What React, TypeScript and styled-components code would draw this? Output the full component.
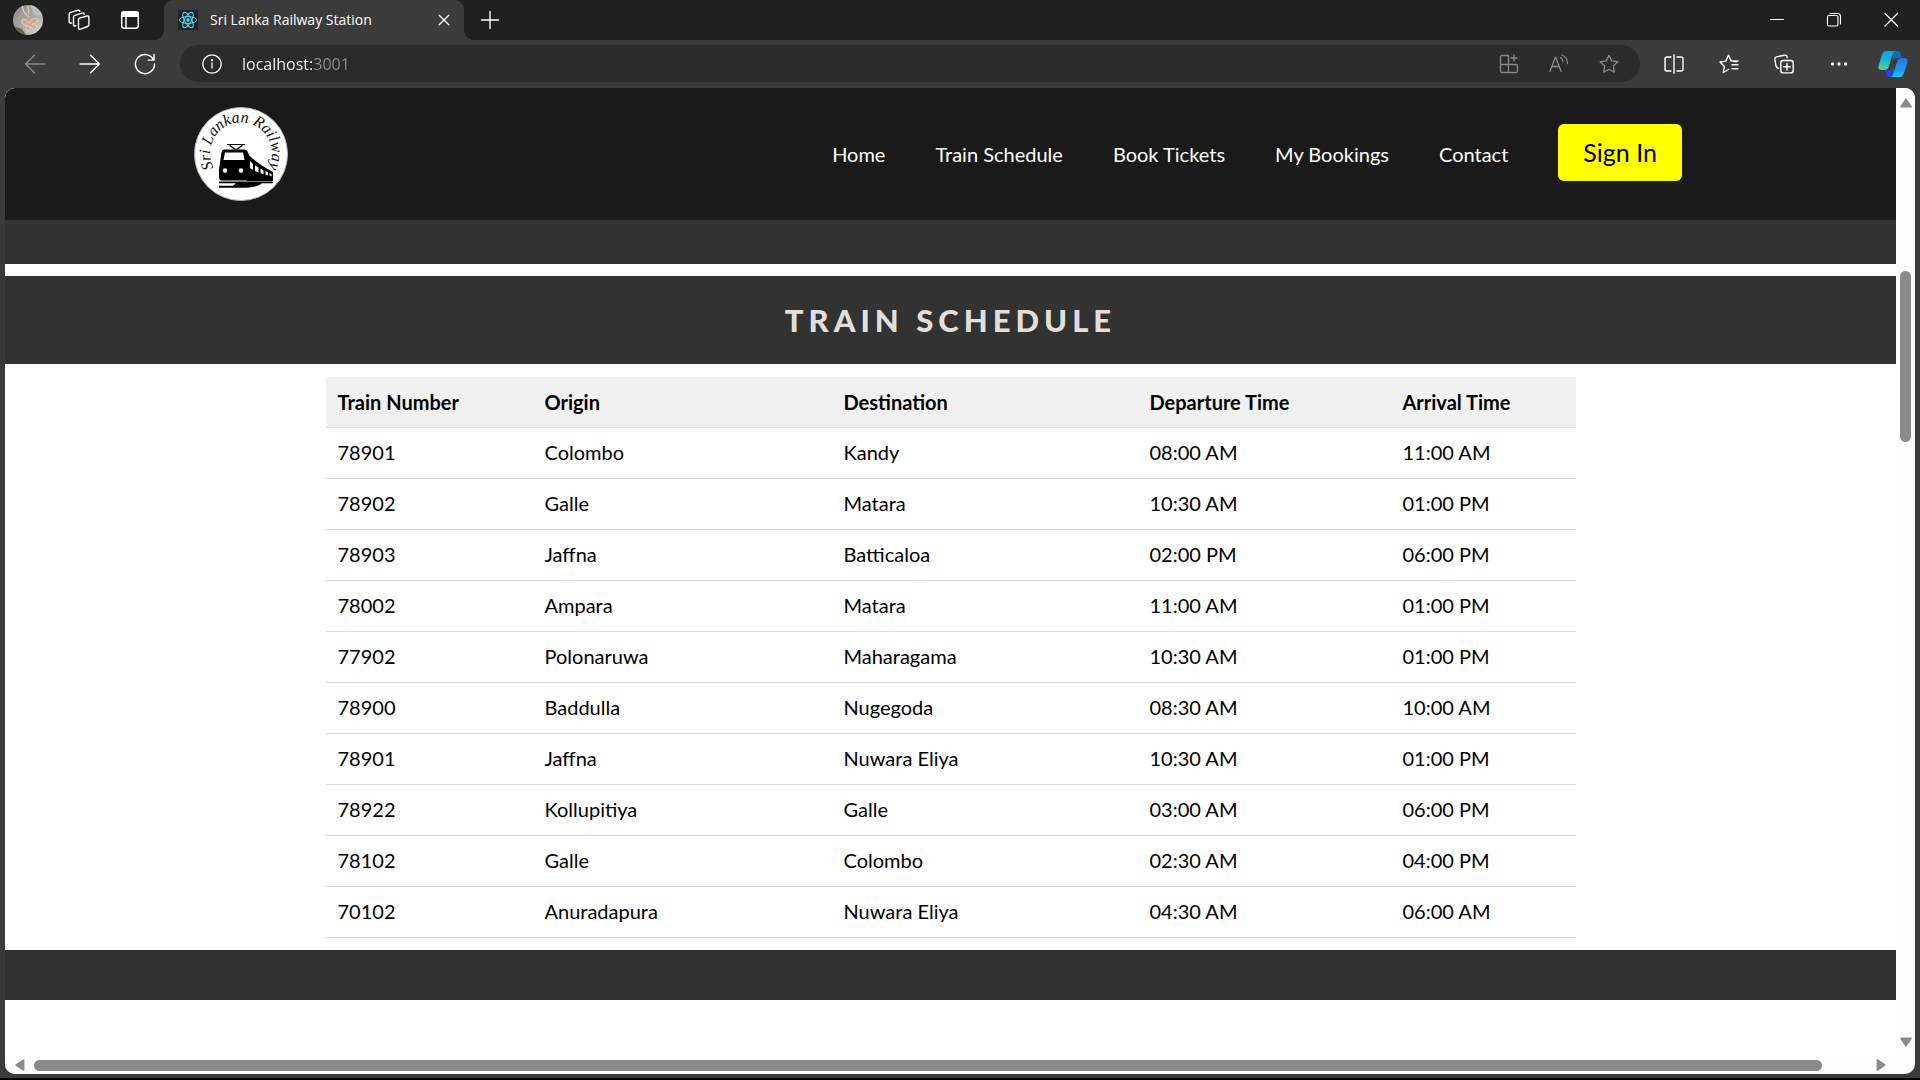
import React from "react";
import styled, { createGlobalStyle } from "styled-components";

const UI_FONT = `"Open Sans", "Noto Sans", sans-serif`;
const PAGE_FONT = `Lato, "Open Sans", sans-serif`;

const GlobalStyle = createGlobalStyle`
  *, *::before, *::after { box-sizing: border-box; }
  body { margin: 0; background: #000; }
  button { border: 0; padding: 0; background: none; font: inherit; color: inherit; cursor: pointer; }
  svg { display: block; }
`;

/* ---------- browser window ---------- */

const Window = styled.div`
  display: flex;
  flex-direction: column;
  min-height: 100vh;
  background: #3b3b3b;
  border-bottom: 2px solid #000;
  font-family: ${UI_FONT};
  color: #fff;
`;

const TitleBar = styled.header`
  display: flex;
  align-items: stretch;
  height: 40px;
  padding-left: 2px;
  background: #202020;
`;

const IconButton = styled.button<{ $width: number; $dim?: boolean }>`
  display: flex;
  align-items: center;
  justify-content: center;
  flex: none;
  width: ${(p) => p.$width}px;
  color: ${(p) => (p.$dim ? "#8a8a8a" : "#fff")};
`;

const Tab = styled.div`
  position: relative;
  display: flex;
  align-items: center;
  gap: 12px;
  width: 300px;
  margin: 0 10px 0 9px;
  padding: 0 8px 0 14px;
  border-radius: 9px 9px 0 0;
  background: #3b3b3b;
  font-size: 14px;
  line-height: 20px;
  white-space: nowrap;

  &::before,
  &::after {
    content: "";
    position: absolute;
    bottom: 0;
    width: 10px;
    height: 10px;
  }
  &::before {
    right: 100%;
    background: radial-gradient(circle at 0 0, #202020 10px, #3b3b3b 10px);
  }
  &::after {
    left: 100%;
    background: radial-gradient(circle at 100% 0, #202020 10px, #3b3b3b 10px);
  }
`;

const TabTitle = styled.span`
  flex: 1;
`;

const WindowControls = styled.div`
  display: flex;
  margin-left: auto;
  padding-right: 1px;
`;

const Toolbar = styled.div`
  display: flex;
  align-items: center;
  height: 48px;
  padding: 0 0 1px 7px;
`;

const AddressBar = styled.div`
  display: flex;
  align-items: center;
  flex: 1;
  height: 37px;
  margin: 0 6px 0 8px;
  padding: 0 6px 0 22px;
  border-radius: 19px;
  background: #2b2b2b;
`;

const AddressInput = styled.input`
  flex: 1;
  min-width: 0;
  margin-left: 20px;
  padding: 0;
  border: 0;
  outline: 0;
  font-family: ${UI_FONT};
  font-size: 16px;
  line-height: 24px;
  color: transparent;
  background: linear-gradient(to right, #fff 70px, #8f8f8f 70px);
  background-clip: text;
  -webkit-background-clip: text;
`;

const Viewport = styled.div`
  display: grid;
  grid-template-columns: minmax(0, 1fr) 19px;
  grid-template-rows: 1fr 18px;
  flex: 1;
  margin: 0 5px 4px;
  border-radius: 10px;
  overflow: hidden;
  background: #fcfcfc;
`;

/* ---------- scroll bars ---------- */

const ScrollTrack = styled.div<{ $horizontal?: boolean }>`
  display: flex;
  flex-direction: ${(p) => (p.$horizontal ? "row" : "column")};
  align-items: center;
  padding: ${(p) => (p.$horizontal ? "0 9px" : "10px 0 9px")};
  background: #fcfcfc;
  color: #8a8a8a;
`;

const ScrollGap = styled.div<{ $share: number }>`
  flex: ${(p) => p.$share} 1 0;
`;

const ScrollThumb = styled.div<{ $share: number }>`
  flex: ${(p) => p.$share} 1 0;
  min-width: 11px;
  min-height: 11px;
  border-radius: 6px;
  background: #8a8a8a;
`;

/* ---------- page ---------- */

const Page = styled.div`
  display: flex;
  flex-direction: column;
  background: #fff;
  color: #000;
  font-family: ${PAGE_FONT};
`;

const NavBar = styled.nav`
  display: flex;
  align-items: center;
  justify-content: space-between;
  min-height: 132px;
  padding: 0 10%;
  background: #1a1a1a;
`;

const NavList = styled.ul`
  display: flex;
  align-items: center;
  gap: 50px;
  margin: 0 25px;
  padding: 0;
  list-style: none;
`;

const NavLink = styled.a`
  color: #fff;
  font-size: 20px;
  line-height: 26px;
  text-decoration: none;
  white-space: nowrap;
`;

const SignIn = styled.button`
  && {
    display: block;
    margin-bottom: 4px;
    padding: 12px 25px 13px;
    border-radius: 6px;
    background: #ff0;
    color: #000;
    font-size: 25px;
    line-height: 32px;
    white-space: nowrap;
  }
`;

const Band = styled.div<{ $height: number }>`
  height: ${(p) => p.$height}px;
  background: #323232;
`;

const Heading = styled.h1`
  margin: 12px 0 0;
  padding: 24px 0;
  background: #323232;
  color: #e2dfda;
  font-size: 31px;
  font-weight: 900;
  line-height: 40px;
  letter-spacing: 5px;
  text-align: center;
  text-transform: uppercase;
`;

const Schedule = styled.table`
  table-layout: fixed;
  width: 90%;
  max-width: 1250px;
  margin: 13px auto 12px;
  border-collapse: collapse;
  font-size: 20px;
  line-height: 26px;
`;

const Column = styled.col<{ $share: number }>`
  width: ${(p) => p.$share}%;
`;

const HeadCell = styled.th`
  padding: 12px;
  border-bottom: 1px solid #ddd;
  background: #f1f1f1;
  text-align: left;
  font-weight: 700;
`;

const Cell = styled.td`
  padding: 11px 12px 13px;
  border-bottom: 1px solid #ddd;
`;

/* ---------- data ---------- */

const links = ["Home", "Train Schedule", "Book Tickets", "My Bookings", "Contact"];

const columns = [
  { title: "Train Number", share: 16.56 },
  { title: "Origin", share: 23.92 },
  { title: "Destination", share: 24.48 },
  { title: "Departure Time", share: 20.24 },
  { title: "Arrival Time", share: 14.8 },
];

const trains = [
  ["78901", "Colombo", "Kandy", "08:00 AM", "11:00 AM"],
  ["78902", "Galle", "Matara", "10:30 AM", "01:00 PM"],
  ["78903", "Jaffna", "Batticaloa", "02:00 PM", "06:00 PM"],
  ["78002", "Ampara", "Matara", "11:00 AM", "01:00 PM"],
  ["77902", "Polonaruwa", "Maharagama", "10:30 AM", "01:00 PM"],
  ["78900", "Baddulla", "Nugegoda", "08:30 AM", "10:00 AM"],
  ["78901", "Jaffna", "Nuwara Eliya", "10:30 AM", "01:00 PM"],
  ["78922", "Kollupitiya", "Galle", "03:00 AM", "06:00 PM"],
  ["78102", "Galle", "Colombo", "02:30 AM", "04:00 PM"],
  ["70102", "Anuradapura", "Nuwara Eliya", "04:30 AM", "06:00 AM"],
];

/* ---------- drawings ---------- */

const Icon = ({ size = 20, stroke = 1.3, children }: { size?: number; stroke?: number; children: React.ReactNode }) => (
  <svg width={size} height={size} viewBox="0 0 20 20" fill="none" stroke="currentColor" strokeWidth={stroke}
    strokeLinecap="round" strokeLinejoin="round" aria-hidden="true">
    {children}
  </svg>
);

const Avatar = () => (
  <svg width="30" height="30" viewBox="0 0 30 30" aria-hidden="true">
    <defs>
      <clipPath id="avatar"><circle cx="15" cy="15" r="15" /></clipPath>
      <linearGradient id="avatarBg" x1="0" y1="0" x2="1" y2="1">
        <stop offset="0" stopColor="#8b8a84" />
        <stop offset=".5" stopColor="#aaa79f" />
        <stop offset="1" stopColor="#e3ddd6" />
      </linearGradient>
    </defs>
    <g clipPath="url(#avatar)">
      <rect width="30" height="30" fill="url(#avatarBg)" />
      <path d="M17 0h13v11l-9-1z" fill="#b9bfbe" />
      <path d="M0 21l9 3 4 6H0z" fill="#5f6059" />
      <path d="M9 0l2 7 5 5M15 1l1 8" stroke="#dccbbb" strokeWidth="1.4" fill="none" />
      <path d="M16 18c-3-5-8-5-7-1 0 3 4 4 6 3-3 2-3 6 0 6 2 0 2-3 2-5 1 3 5 5 6 2 1-2-1-4-4-4 4 0 6-3 5-5-2-2-6 0-8 4z"
        fill="#cfa994" stroke="#efd9c9" strokeWidth=".8" />
    </g>
  </svg>
);

const Workspaces = () => (
  <svg width="22" height="22" viewBox="0 0 22 22" fill="none" stroke="currentColor" strokeWidth="1.4"
    strokeLinecap="round" strokeLinejoin="round" aria-hidden="true">
    <path d="M11.500 9.200l7.500-2.200c1.200-.3 1.900.2 1.900 1.400v7.200c0 1-.4 1.600-1.300 1.900l-7 2.700c-1.300.4-2.100-.1-2.100-1.400v-7.600c0-1.100.3-1.700 1-2z" />
    <path d="M7.800 16.800c-1.500.6-2.300.1-2.300-1.300V8.300c0-1.100.5-1.700 1.400-2l7.300-2.100c1.100-.3 1.800 0 2 1" />
    <path d="M3.500 14c-1.500.5-2.400 0-2.400-1.400V5.400c0-1.100.5-1.700 1.400-2l7.300-2.100c1.100-.3 1.800 0 2 1" />
  </svg>
);

const ReactMark = () => (
  <svg width="20" height="20" viewBox="0 0 20 20" aria-hidden="true">
    <rect width="20" height="20" rx="1" fill="#20232a" />
    <g fill="none" stroke="#61dafb" strokeWidth="1">
      <ellipse cx="10" cy="10" rx="8.7" ry="3.4" />
      <ellipse cx="10" cy="10" rx="8.7" ry="3.4" transform="rotate(60 10 10)" />
      <ellipse cx="10" cy="10" rx="8.7" ry="3.4" transform="rotate(120 10 10)" />
    </g>
    <circle cx="10" cy="10" r="1.7" fill="#61dafb" />
  </svg>
);

const Copilot = () => (
  <svg width="30" height="28" viewBox="0 0 30 28" aria-hidden="true">
    <defs>
      <linearGradient id="copA" x1="0" y1="0" x2="0" y2="1">
        <stop offset="0" stopColor="#0ba5e8" />
        <stop offset=".5" stopColor="#19b5cb" />
        <stop offset="1" stopColor="#58d68c" />
      </linearGradient>
      <linearGradient id="copB" x1="0" y1="0" x2="0" y2="1">
        <stop offset="0" stopColor="#2f6fe0" />
        <stop offset=".6" stopColor="#1a9bf5" />
        <stop offset="1" stopColor="#14c4f4" />
      </linearGradient>
    </defs>
    <path d="M14 1h5c2 0 3 1 4 4l1 3h-5c-2 0-3 1-4 3z" fill="#0c6fb8" />
    <path d="M16 27h-4c-2 0-3-1-4-4l-1-3h5c2 0 3-1 4-3z" fill="#1f46d8" />
    <path d="M9 1h9c-2 0-3 2-4 5l-3 10c-1 3-2 4-5 4H4c-4 0-4-3-3-6L4 5c1-3 2-4 5-4z" fill="url(#copA)" />
    <path d="M21 27h-9c2 0 3-2 4-5l3-10c1-3 2-4 5-4h2c4 0 4 3 3 6l-3 9c-1 3-2 4-5 4z" fill="url(#copB)" />
  </svg>
);

const Arrow = ({ turn }: { turn: number }) => (
  <svg width="12" height="10" viewBox="0 0 12 10" transform={`rotate(${turn})`} aria-hidden="true">
    <path d="M6 1.2L11 8.6H1z" fill="currentColor" stroke="currentColor" strokeWidth="1.6" strokeLinejoin="round" />
  </svg>
);

const Logo = () => (
  <svg width="94" height="94" viewBox="0 0 94 94" role="img" aria-label="Sri Lankan Railway">
    <defs>
      <path id="logoArc" d="M23 66A31 31 0 1 1 71 66" />
    </defs>
    <circle cx="47" cy="47" r="46.500" fill="#fff" stroke="#b5b5b5" />
    <text fill="#111" fontFamily='"Liberation Serif", serif' fontStyle="italic" fontSize="16" textAnchor="middle">
      <textPath href="#logoArc" startOffset="50%">Sri Lankan Railway</textPath>
    </text>
    <g fill="#000">
      <path d="M33 37h18v1H33zM36 38l6 4 6-4 1 .7-5 3.600h-4l-5-3.600zM30 42.500h20c3 0 4 2 5 6l2 14v7c0 3-1 4-3 4H28c-2 0-3-1-3-4v-7l2-14c.5-4 1-6 3-6z" />
      <path d="M53 46c4 5 12 11 26 19v9H53z" />
      <path d="M25 74.500h54v1.700H68c-5 4-12 4.500-20 4.500H25v-2h14l3-2.500H25z" />
    </g>
    <g fill="#fff">
      <path d="M31 45.500h18l1.500 7.500H29.500z" />
      <circle cx="31" cy="63.500" r="2.300" />
      <circle cx="47" cy="63.500" r="2.300" />
      <path d="M56 54l3 3v6l-3-2zM61 58.500l3.500 2v5L61 64zM66.500 61.500l3 2v4l-3-1.500zM71.500 64l2.500 1.500v3l-2.500-1zM75.500 66l2 1v2.500l-2-1z" />
    </g>
  </svg>
);

/* ---------- application ---------- */

export default function App() {
  return (
    <Window>
      <GlobalStyle />
      <TitleBar>
        <IconButton $width={51} aria-label="Profile"><Avatar /></IconButton>
        <IconButton $width={51} aria-label="Workspaces"><Workspaces /></IconButton>
        <IconButton $width={51} aria-label="Tab actions">
          <Icon stroke={1.5}>
            <rect x="1.700" y="1.700" width="16.600" height="16.600" rx="2.500" />
            <path d="M2 2.500h16v3.800H2z" fill="currentColor" />
            <path d="M6 7v11" />
          </Icon>
        </IconButton>
        <Tab>
          <ReactMark />
          <TabTitle>Sri Lanka Railway Station</TabTitle>
          <IconButton $width={24} aria-label="Close tab">
            <Icon size={16} stroke={1.6}><path d="M4 4l12 12M16 4L4 16" /></Icon>
          </IconButton>
        </Tab>
        <IconButton $width={32} aria-label="New tab">
          <Icon stroke={1.4}><path d="M10 1.500v17M1.500 10h17" /></Icon>
        </IconButton>
        <WindowControls>
          <IconButton $width={57} aria-label="Minimize">
            <Icon stroke={1}><path d="M3.500 9.500h13" /></Icon>
          </IconButton>
          <IconButton $width={57} aria-label="Restore">
            <Icon stroke={1.100}><rect x="3.500" y="5.500" width="10.500" height="10.500" rx="1.500" /><path d="M6 3.500h7.500c1.800 0 3 1.200 3 3V14" /></Icon>
          </IconButton>
          <IconButton $width={57} aria-label="Close window">
            <Icon stroke={1.200}><path d="M4 3.500l12.500 12.500M16.500 3.500L4 16" /></Icon>
          </IconButton>
        </WindowControls>
      </TitleBar>

      <Toolbar>
        <IconButton $width={55} $dim aria-label="Back">
          <Icon size={22}><path d="M19 10H1.500M9.500 2L1.500 10l8 8" /></Icon>
        </IconButton>
        <IconButton $width={55} aria-label="Forward">
          <Icon size={22}><path d="M1 10h17.500M10.500 2l8 8-8 8" /></Icon>
        </IconButton>
        <IconButton $width={55} aria-label="Refresh">
          <Icon size={22}><path d="M17.800 6.200A8.700 8.700 0 1 0 18.700 10M18.200 1.300v5.200H13" /></Icon>
        </IconButton>
        <AddressBar>
          <IconButton $width={20} aria-label="Site information">
            <Icon><circle cx="10" cy="10" r="9.200" /><path d="M10 9v5" /><circle cx="10" cy="6.200" r=".5" fill="currentColor" /></Icon>
          </IconButton>
          <AddressInput aria-label="Address" defaultValue="localhost:3001" />
          <IconButton $width={50} $dim aria-label="Apps">
            <Icon><path d="M9.500 1.500H3c-1 0-1.500.5-1.500 1.500v14c0 1 .5 1.500 1.500 1.500h14c1 0 1.500-.5 1.500-1.500v-5c0-1-.5-1.500-1.500-1.500H1.500M9.500 1.500v17M15 1v6M12 4h6" /></Icon>
          </IconButton>
          <IconButton $width={50} $dim aria-label="Read aloud">
            <Icon><path d="M.8 17.500L6.500 3l5.700 14.500M3 12.500h7M11.500 3.500c1.500 1 2.300 2.300 2.500 4.300M13 1c3.500 1.500 5.300 4.500 5.500 8.500" /></Icon>
          </IconButton>
          <IconButton $width={50} $dim aria-label="Add to favorites">
            <Icon><path d="M10 1.200l2.700 5.700 6.100.8-4.500 4.300 1.100 6.200L10 15.300l-5.400 2.900L5.700 12 1.200 7.700l6.100-.8z" /></Icon>
          </IconButton>
        </AddressBar>
        <IconButton $width={55} aria-label="Split screen">
          <Icon stroke={1.400}><path d="M7 3H3c-1.200 0-2 .8-2 2v10c0 1.200.8 2 2 2h4M13 3h4c1.200 0 2 .8 2 2v10c0 1.200-.8 2-2 2h-4M10 .8v18.400" /></Icon>
        </IconButton>
        <IconButton $width={55} aria-label="Favorites">
          <Icon stroke={1.400}><path d="M9.500 15.500L4.300 18.500l1.100-6L1 8l5.800-.9L9.500 1.300l2.600 5.600 5.400.9M13 10.800h6M13 14.800h6M13.500 7h5.500" /></Icon>
        </IconButton>
        <IconButton $width={55} aria-label="Collections">
          <Icon stroke={1.400}><rect x="6.800" y="6.500" width="12.400" height="12.400" rx="2.500" /><path d="M13 9.500v6.500M9.700 12.700h6.500M4.500 14.500C3 14 2.500 13.500 2 12L.9 5.500C.7 4 1.200 3.200 2.500 2.900L10.500 1.200c1.500-.2 2.300.4 2.600 1.700l.1.700" /></Icon>
        </IconButton>
        <IconButton $width={55} aria-label="Settings and more">
          <Icon><g fill="currentColor"><circle cx="3.500" cy="10" r="1" /><circle cx="10" cy="10" r="1" /><circle cx="16.500" cy="10" r="1" /></g></Icon>
        </IconButton>
        <IconButton $width={54} aria-label="Copilot"><Copilot /></IconButton>
      </Toolbar>

      <Viewport>
        <Page>
          <NavBar>
            <Logo />
            <NavList>
              {links.map((label) => (
                <li key={label}><NavLink href="#">{label}</NavLink></li>
              ))}
              <li><SignIn>Sign In</SignIn></li>
            </NavList>
          </NavBar>
          <Band $height={44} />
          <Heading>Train Schedule</Heading>
          <Schedule>
            <colgroup>
              {columns.map((c) => <Column key={c.title} $share={c.share} />)}
            </colgroup>
            <thead>
              <tr>{columns.map((c) => <HeadCell key={c.title} scope="col">{c.title}</HeadCell>)}</tr>
            </thead>
            <tbody>
              {trains.map((row, i) => (
                <tr key={i}>{row.map((value, j) => <Cell key={j}>{value}</Cell>)}</tr>
              ))}
            </tbody>
          </Schedule>
          <Band $height={50} />
        </Page>
        <ScrollTrack>
          <Arrow turn={0} />
          <ScrollGap $share={163} />
          <ScrollThumb $share={171} />
          <ScrollGap $share={595} />
          <Arrow turn={180} />
        </ScrollTrack>
        <ScrollTrack $horizontal>
          <Arrow turn={-90} />
          <ScrollGap $share={8} />
          <ScrollThumb $share={1788} />
          <ScrollGap $share={53} />
          <Arrow turn={90} />
        </ScrollTrack>
      </Viewport>
    </Window>
  );
}
